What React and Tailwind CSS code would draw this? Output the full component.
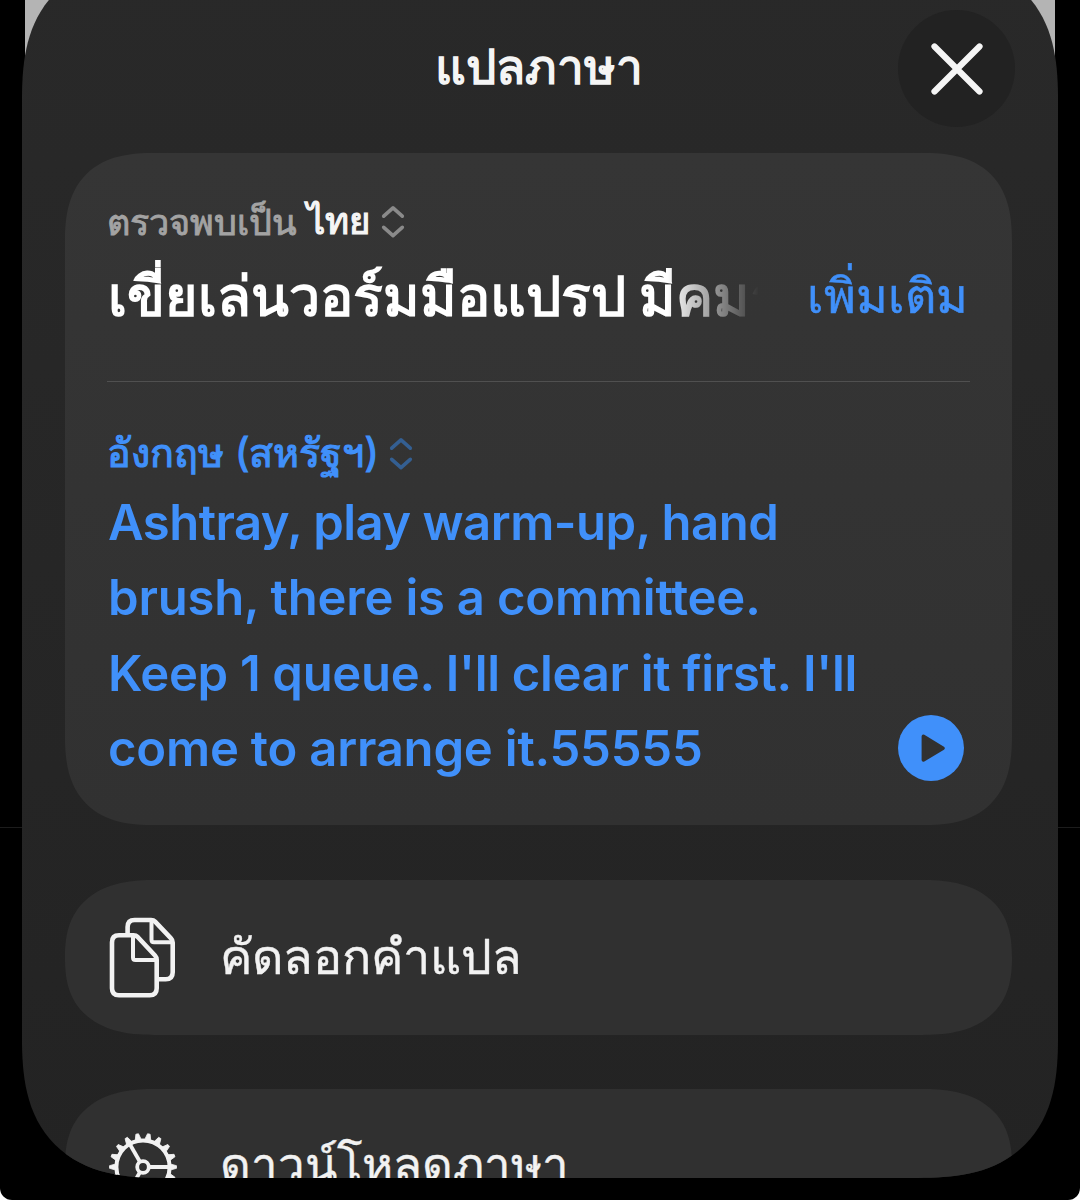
const TRANSLATION = [
  { text: "Ashtray, play warm-up, hand", className: "tracking-[-0.5px]" },
  { text: "brush, there is a committee.", className: "tracking-[-0.2px]" },
  { text: "Keep 1 queue. I'll clear it first. I'll", className: "tracking-[-0.3px]" },
  { text: "come to arrange it.55555", className: "tracking-[-0.2px]" },
];

const GEAR_TEETH = Array.from({ length: 18 }, (_, i) => i * 20);
const GEAR_SPOKES = [0, 120, 240];

function CloseIcon() {
  return (
    <svg viewBox="0 0 56 56" className="size-14" fill="none" stroke="currentColor" strokeWidth="6.2" strokeLinecap="round">
      <path d="M5.5 5.5l45 45M50.5 5.5l-45 45" />
    </svg>
  );
}

function ChevronsIcon({ className }) {
  return (
    <svg
      viewBox="0 0 24 34"
      className={`h-[34px] w-6 ${className}`}
      fill="none"
      stroke="currentColor"
      strokeWidth="3.6"
      strokeLinecap="round"
      strokeLinejoin="round"
    >
      <path d="M2.7 11.2l9.3-8.4 9.3 8.4M2.7 22.3l9.3 8.4 9.3-8.4" />
    </svg>
  );
}

function PlayIcon() {
  return (
    <svg viewBox="0 0 66 66" className="size-[66px] shrink-0">
      <circle cx="33" cy="33" r="33" fill="#4090fa" />
      <path
        d="M25.4 21.4v23.6L45 33.2z"
        fill="#313131"
        stroke="#313131"
        strokeWidth="3.6"
        strokeLinejoin="round"
      />
    </svg>
  );
}

function CopyIcon() {
  return (
    <svg
      viewBox="0 0 70 84"
      className="h-[84px] w-[70px]"
      fill="none"
      stroke="currentColor"
      strokeWidth="4.6"
      strokeLinejoin="round"
    >
      <path d="M19.6 18.5V11q0-7 7-7h16.5q2.5 0 4 1.6L63 22.3q1.7 1.7 1.7 4.2v29.8q0 7-7 7h-8" />
      <path d="M43.5 4v19.8q0 2.5 2.5 2.5h18.5" strokeWidth="4" />
      <path d="M11 19.3h14.5q2.5 0 4.2 1.7L47 39.5q1.7 1.8 1.7 4.3v28.5q0 7-7 7H11q-7 0-7-7v-46q0-7 7-7z" />
      <path d="M25 19.5v22q0 2.5 2.5 2.5h21" strokeWidth="4" />
    </svg>
  );
}

function GearIcon() {
  return (
    <svg viewBox="-35 -35 70 70" className="size-[70px]" fill="none" stroke="currentColor">
      <circle r="26.6" strokeWidth="4" />
      <circle r="5.8" strokeWidth="3.8" />
      {GEAR_SPOKES.map((angle) => (
        <path key={angle} d="M7 0h19" strokeWidth="3.8" transform={`rotate(${-angle})`} />
      ))}
      {GEAR_TEETH.map((angle) => (
        <path
          key={angle}
          d="M27.5-3L33.5-1.3v2.6L27.5 3z"
          fill="currentColor"
          strokeWidth="0.8"
          strokeLinejoin="round"
          transform={`rotate(${angle})`}
        />
      ))}
    </svg>
  );
}

function ActionRow({ icon, label, className }) {
  return (
    <button
      type="button"
      className="flex h-[155px] w-full shrink-0 items-center rounded-[90px/77px] bg-[#303030] pl-[42.5px] text-left text-[#f2f2f2] [corner-shape:superellipse(1.3)]"
    >
      <span className="flex w-[112px] shrink-0">{icon}</span>
      <span className={`whitespace-nowrap [-webkit-text-stroke:0.4px] ${className}`}>{label}</span>
    </button>
  );
}

export default function App() {
  return (
    <div className="h-[1200px] w-[1080px] overflow-hidden bg-white font-['Inter',sans-serif]">
      <div className="relative flex h-full justify-center overflow-hidden rounded-b-[12px] bg-black">
        <div className="absolute inset-x-[25px] top-0 h-[60px] bg-[#b4b4b4]" />
        <div className="absolute inset-x-0 top-[827px] h-px bg-[#1c1c1c]" />

        <main className="relative -mt-[40px] flex h-[1218px] w-[1036px] shrink-0 flex-col overflow-hidden rounded-[140px] bg-linear-to-b from-[#292929] to-[#232323] pt-[50px] pr-[46px] pl-[43px] [corner-shape:superellipse(1.36)]">
          <header className="grid h-[117px] shrink-0 grid-cols-[1fr_auto_1fr] items-center">
            <span />
            <h1 className="pb-px text-[47.8px] leading-none font-normal text-[#f5f5f5] [-webkit-text-stroke:1.5px]">
              แปลภาษา
            </h1>
            <button
              type="button"
              aria-label="ปิด"
              className="-mr-[3px] flex size-[117px] items-center justify-center justify-self-end rounded-full bg-[#222] text-[#f5f5f5]"
            >
              <CloseIcon />
            </button>
          </header>

          <section className="mt-[26px] flex h-[672px] shrink-0 flex-col rounded-[90px] bg-linear-to-b from-[#353535] to-[#313131] px-[42px] pt-[44px] [corner-shape:superellipse(1.36)]">
            <div className="flex h-[50px] items-center whitespace-nowrap">
              <span className="pb-px text-[36px] leading-none text-[#a3a3a3] [-webkit-text-stroke:0.9px]">ตรวจพบเป็น</span>
              <span className="ml-[10px] pb-px text-[36.5px] leading-none text-[#f5f5f5] [-webkit-text-stroke:1.2px]">ไทย</span>
              <ChevronsIcon className="ml-[11px] text-[#8a8a8a]" />
            </div>
            <div className="flex h-[135px] items-start border-b border-[#505050] pt-[13px]">
              <p className="w-[652px] overflow-hidden pl-px text-[55.5px] leading-[72px] font-bold whitespace-nowrap text-white [mask-image:linear-gradient(to_right,#000_560px,transparent_652px)]">
                เขี่ยเล่นวอร์มมือแปรป มีคมา
              </p>
              <button type="button" className="mr-[2px] ml-auto text-[48.3px] leading-[72px] whitespace-nowrap text-[#4090fa] [-webkit-text-stroke:0.6px]">
                เพิ่มเติม
              </button>
            </div>

            <div className="mt-[47px] flex h-[50px] items-center whitespace-nowrap text-[#4090fa]">
              <span className="text-[39.4px] leading-none [-webkit-text-stroke:1.2px]">อังกฤษ (สหรัฐฯ)</span>
              <ChevronsIcon className="ml-[10px] text-[#345f92]" />
            </div>
            <div className="mt-[6px] flex items-end justify-between">
              <p className="pl-px text-[49px] leading-[75.3px] font-semibold whitespace-nowrap text-[#4090fa]">
                {TRANSLATION.map((line) => (
                  <span key={line.text} className={`block ${line.className}`}>
                    {line.text}
                  </span>
                ))}
              </p>
              <button type="button" aria-label="เล่น" className="mr-[6px] mb-[5px] -ml-[66px]">
                <PlayIcon />
              </button>
            </div>
          </section>

          <div className="mt-[55px] flex flex-col gap-[54px]">
            <ActionRow icon={<CopyIcon />} label="คัดลอกคำแปล" className="pb-px text-[48.5px]" />
            <ActionRow icon={<GearIcon />} label="ดาวน์โหลดภาษา" className="pb-1 text-[47.4px]" />
          </div>
        </main>
      </div>
    </div>
  );
}
